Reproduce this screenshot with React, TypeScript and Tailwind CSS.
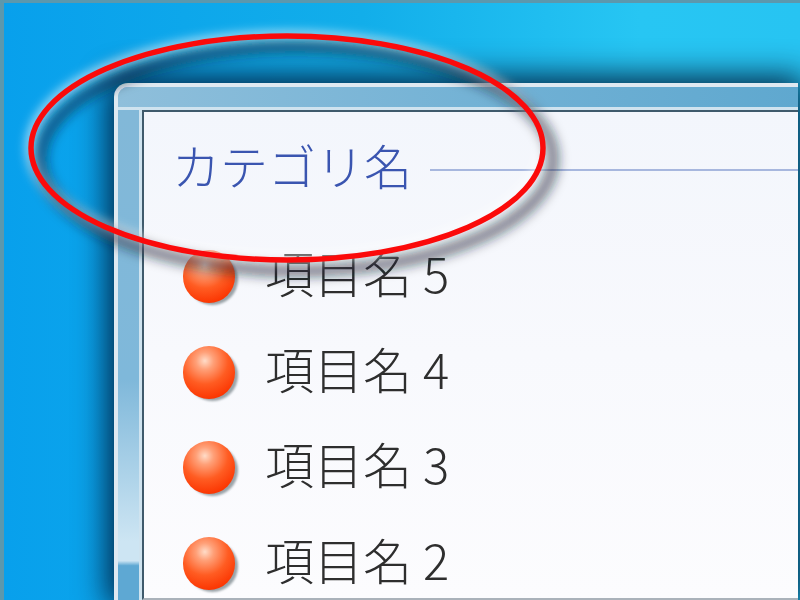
const items = ["5", "4", "3", "2"];

function Ball() {
  return (
    <div className="relative w-[52px] h-[53px] shrink-0">
      <div className="absolute left-[4px] top-[4px] w-[51px] h-[51px] rounded-full bg-[#9aa3a8] blur-[1px]" />
      <div className="absolute inset-0 rounded-full blur-[0.5px] bg-[radial-gradient(circle_at_42%_28%,#ffdcc8_0%,#ffa078_18%,#ff5c22_48%,#fb3400_80%,#fb2f00_100%)]" />
    </div>
  );
}

export default function App() {
  return (
    <div className="relative w-[800px] h-[600px] overflow-hidden flex flex-col border-t-[3px] border-l-[4px] border-[#5c98ad] bg-[linear-gradient(90deg,#08a0ec_0%,#12aeea_45%,#27c6f3_80%,#27c4f2_100%)] [font-family:'Noto_Sans_CJK_JP','Noto_Sans',sans-serif]">
      <div className="ml-[110px] mt-[80px] mr-[2px] flex-1 flex flex-col rounded-tl-[14px] shadow-[0_0_32px_6px_rgba(0,25,55,0.95)] border-t-[4px] border-l-[4px] border-[#dfe9f1] bg-[#7fb8d8] overflow-hidden">
        <div className="h-[23px] shrink-0 border-b-[3px] border-[#cfe3ef] bg-[linear-gradient(90deg,#8fbfdb_0%,#6fb0d4_60%,#5fa8cf_100%)]" />
        <div className="flex-1 flex min-h-0">
          <div className="w-[24px] shrink-0 border-r-[3px] border-[#cfe3ef] bg-[linear-gradient(180deg,#82b8d8_0%,#7fb8da_55%,#cde5f3_88%,#cde5f3_92%,#5ea8d3_93%,#5ea8d3_100%)]" />
          <div className="flex-1 flex flex-col border-t-[2px] border-l-[2px] border-b-[2px] border-t-[#3f5a6c] border-l-[#3f5a6c] border-b-[#aab2ba] bg-[linear-gradient(180deg,#f3f6fc_0%,#f8f9fd_50%,#fcfcfe_100%)]">
            <div className="flex items-start pl-[28px] pt-[28px] h-[138px] shrink-0 blur-[0.7px]">
              <span className="text-[48px] leading-none text-[#3a55b0] font-light">カテゴリ名</span>
              <div className="flex-1 h-[2px] bg-[#a7b7de] ml-[18px] mt-[29px]" />
            </div>
            <div className="flex flex-col gap-[42.5px] pl-[39px]">
              {items.map((n) => (
                <div key={n} className="flex items-center h-[53px] blur-[0.6px]">
                  <Ball />
                  <span className="ml-[30px] pb-[10px] text-[49px] leading-none text-[#2e2e2e] font-light whitespace-nowrap">項目名</span>
                  <span className="ml-[11px] pb-[10px] text-[49px] leading-none text-[#2e2e2e] font-light">{n}</span>
                </div>
              ))}
            </div>
          </div>
        </div>
      </div>
      <svg className="absolute left-[-4px] top-[-3px] w-[800px] h-[600px] pointer-events-none" viewBox="0 0 800 600">
        <defs>
          <filter id="s" x="-20%" y="-20%" width="140%" height="140%"><feGaussianBlur stdDeviation="6" /></filter>
          <filter id="h" x="-20%" y="-20%" width="140%" height="140%"><feGaussianBlur stdDeviation="5" /></filter>
        </defs>
        <ellipse cx="287" cy="148" rx="256" ry="112" fill="none" stroke="#ffffff" strokeOpacity="0.55" strokeWidth="12" filter="url(#h)" />
        <ellipse cx="297" cy="159" rx="256" ry="112" fill="none" stroke="#10202c" strokeOpacity="0.6" strokeWidth="11" filter="url(#s)" />
        <ellipse cx="287" cy="148" rx="256" ry="112" fill="none" stroke="#fb0a0a" strokeWidth="5.5" />
      </svg>
    </div>
  );
}
